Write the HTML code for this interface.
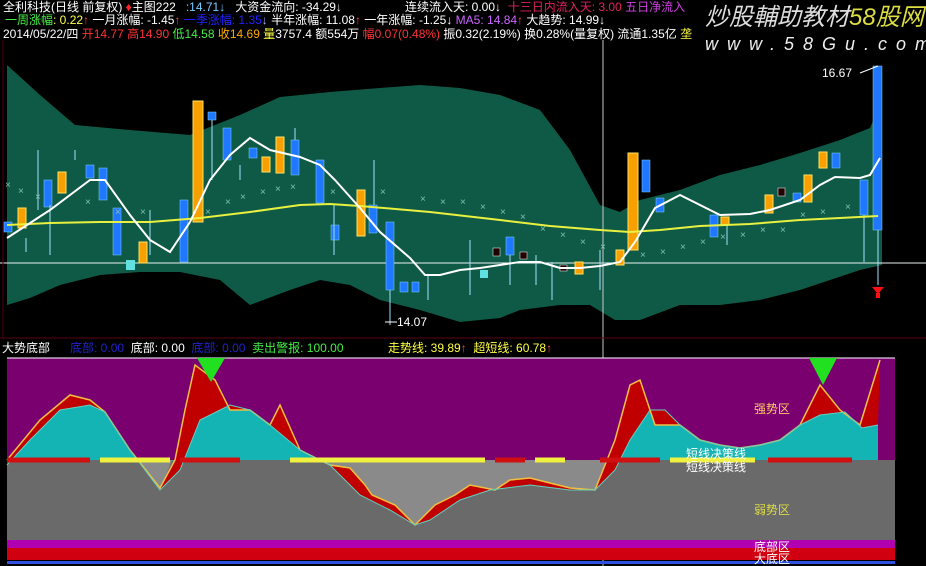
<!DOCTYPE html>
<html><head><meta charset="utf-8"><style>
body{margin:0;background:#000;width:926px;height:566px;overflow:hidden;position:relative;font-family:"Liberation Sans","Noto Sans CJK SC",sans-serif;font-size:12px}
.t{position:absolute;white-space:nowrap;line-height:14px}
</style></head><body>
<svg width="926" height="566" style="position:absolute;left:0;top:0">
<polygon fill="#0f5a46" points="7,65 40,95 75,125 130,130 190,135 240,115 280,97 330,92 380,88 420,85 460,88 500,95 540,110 570,150 600,205 620,212 640,200 680,190 720,175 760,165 800,153 840,140 870,128 882,100 882,265 860,270 830,280 800,290 760,300 720,305 680,305 640,320 615,320 590,305 560,305 520,310 500,318 460,322 420,310 380,300 350,285 320,280 290,290 250,305 220,280 180,272 140,272 100,275 60,285 30,298 7,305"/>
<line x1="0" y1="263" x2="926" y2="263" stroke="#e8f0f0" stroke-width="1"/>
<line x1="603" y1="40" x2="603" y2="566" stroke="#c8c8c8" stroke-width="1"/>
<line x1="0" y1="338" x2="926" y2="338" stroke="#600010" stroke-width="1"/>
<line x1="3" y1="40" x2="3" y2="338" stroke="#500010" stroke-width="1"/>
<g>
<g fill="#1f78ff" stroke="#7fd0ff" stroke-width="0.5">
<rect x="4" y="222" width="8" height="10"/><rect x="44" y="180" width="8" height="27"/><rect x="86" y="165" width="8" height="13"/><rect x="99" y="168" width="8" height="32"/><rect x="113" y="208" width="8" height="47"/><rect x="180" y="200" width="8" height="62"/><rect x="208" y="112" width="8" height="8"/><rect x="223" y="128" width="8" height="32"/><rect x="249" y="148" width="8" height="10"/><rect x="291" y="140" width="8" height="35"/><rect x="316" y="160" width="8" height="43"/><rect x="331" y="225" width="8" height="15"/><rect x="369" y="205" width="8" height="28"/><rect x="386" y="222" width="8" height="68"/><rect x="400" y="282" width="8" height="10"/><rect x="412" y="282" width="7" height="10"/><rect x="506" y="237" width="8" height="18"/><rect x="642" y="160" width="8" height="32"/><rect x="656" y="198" width="8" height="14"/><rect x="710" y="215" width="8" height="22"/><rect x="793" y="193" width="8" height="9"/><rect x="832" y="153" width="8" height="15"/><rect x="860" y="180" width="8" height="35"/><rect x="873" y="66" width="9" height="164"/>
</g>
<g fill="#f8a000" stroke="#ffe060" stroke-width="1">
<rect x="18" y="208" width="8" height="20"/><rect x="58" y="172" width="8" height="21"/><rect x="139" y="242" width="8" height="21"/><rect x="193" y="101" width="10" height="121"/><rect x="262" y="157" width="8" height="15"/><rect x="276" y="137" width="8" height="36"/><rect x="357" y="190" width="8" height="46"/><rect x="575" y="262" width="8" height="12"/><rect x="616" y="250" width="8" height="15"/><rect x="628" y="153" width="10" height="97"/><rect x="721" y="217" width="8" height="8"/><rect x="765" y="195" width="8" height="18"/><rect x="804" y="175" width="8" height="27"/><rect x="819" y="152" width="8" height="16"/>
</g>
<rect x="126" y="260" width="9" height="10" fill="#60e0e0"/><rect x="480" y="270" width="8" height="8" fill="#60e0e0"/>
<g fill="#200000" stroke="#fff" stroke-width="0.5"><rect x="493" y="248" width="7" height="8"/><rect x="520" y="252" width="7" height="7"/><rect x="560" y="265" width="7" height="6"/><rect x="778" y="188" width="7" height="8"/></g>
<g stroke="#a0e0ff" stroke-width="1">
<line x1="26" y1="238" x2="26" y2="252"/><line x1="38" y1="150" x2="38" y2="210"/><line x1="50" y1="205" x2="50" y2="255"/><line x1="75" y1="150" x2="75" y2="160"/><line x1="150" y1="210" x2="150" y2="255"/><line x1="212" y1="120" x2="212" y2="180"/><line x1="240" y1="165" x2="240" y2="180"/><line x1="295" y1="128" x2="295" y2="140"/><line x1="334" y1="205" x2="334" y2="255"/><line x1="374" y1="160" x2="374" y2="205"/><line x1="390" y1="290" x2="390" y2="325"/><line x1="470" y1="240" x2="470" y2="295"/><line x1="510" y1="255" x2="510" y2="285"/><line x1="536" y1="255" x2="536" y2="285"/><line x1="552" y1="262" x2="552" y2="300"/><line x1="600" y1="250" x2="600" y2="290"/><line x1="727" y1="225" x2="727" y2="245"/><line x1="864" y1="215" x2="864" y2="262"/><line x1="878" y1="230" x2="878" y2="285"/><line x1="428" y1="275" x2="428" y2="300"/>
</g>
<g fill="#80c0b0" font-size="10">
<text x="5" y="188">×</text><text x="18" y="194">×</text><text x="35" y="200">×</text><text x="85" y="205">×</text><text x="115" y="215">×</text><text x="140" y="215">×</text><text x="205" y="215">×</text><text x="225" y="205">×</text><text x="240" y="200">×</text><text x="260" y="195">×</text><text x="275" y="192">×</text><text x="290" y="190">×</text><text x="330" y="195">×</text><text x="380" y="195">×</text><text x="420" y="202">×</text><text x="440" y="205">×</text><text x="460" y="205">×</text><text x="480" y="210">×</text><text x="500" y="215">×</text><text x="520" y="220">×</text><text x="540" y="232">×</text><text x="560" y="238">×</text><text x="580" y="245">×</text><text x="600" y="250">×</text><text x="640" y="258">×</text><text x="660" y="255">×</text><text x="680" y="250">×</text><text x="700" y="245">×</text><text x="720" y="240">×</text><text x="740" y="238">×</text><text x="760" y="233">×</text><text x="780" y="233">×</text><text x="800" y="218">×</text><text x="820" y="215">×</text><text x="845" y="210">×</text>
</g>
</g>
<polyline fill="none" stroke="#e8f040" stroke-width="2" points="7,225 50,223 100,222 150,222 200,218 250,212 300,205 330,204 360,206 430,212 500,220 550,226 600,230 630,232 660,230 700,226 750,224 800,220 840,218 878,216"/>
<polyline fill="none" stroke="#ffffff" stroke-width="2" points="7,238 50,210 90,180 105,180 130,215 150,240 170,252 190,222 210,180 230,155 250,138 270,150 300,157 320,165 335,180 360,208 380,232 410,258 425,275 440,275 460,270 480,268 500,265 520,262 540,262 560,268 580,268 600,266 620,262 635,242 655,208 680,195 700,205 720,215 750,214 770,210 800,200 820,185 835,177 860,178 870,175 880,158"/>
<line x1="385" y1="322" x2="397" y2="322" stroke="#fff"/>
<line x1="860" y1="73" x2="878" y2="66" stroke="#fff"/>
<polygon fill="#ff1010" points="872,287 884,287 878,294"/><rect x="876" y="293" width="4" height="5" fill="#ff1010"/>
<!-- lower panel -->
<rect x="7" y="358" width="888" height="102" fill="#7a0070"/>
<rect x="7" y="460" width="888" height="80" fill="#6a6a6a"/>
<rect x="7" y="540" width="888" height="8" fill="#b000b0"/>
<rect x="7" y="548" width="888" height="12" fill="#d00010"/>
<rect x="7" y="561" width="888" height="3" fill="#3050e0"/>
<line x1="7" y1="358" x2="895" y2="358" stroke="#ffffff" stroke-width="1"/>
<!-- cyan above 460 -->
<polygon fill="#14b4b4" points="7,465 30,440 60,410 90,405 105,412 130,450 137,460 7,460"/>
<polygon fill="#14b4b4" points="172,460 180,470 200,420 230,405 250,410 270,425 300,450 320,460"/>
<polygon fill="#14b4b4" points="608,460 615,470 630,440 650,410 665,410 680,425 700,440 720,445 740,448 760,445 780,440 800,425 820,415 845,412 862,428 878,425 878,460"/>
<!-- lighter gray below 460 -->
<polygon fill="#8a8a8a" points="137,460 160,490 172,460"/>
<polygon fill="#8a8a8a" points="320,460 330,465 360,495 390,510 415,525 430,520 460,500 490,490 530,485 570,490 595,490 608,460"/>
<!-- red between lines -->
<polygon fill="#c00000" points="7,460 40,420 70,395 90,400 105,412 130,450 160,488 175,460 185,410 195,365 215,380 230,410 250,410 270,425 280,405 300,450 330,465 350,468 365,485 372,495 395,505 415,525 435,505 455,495 470,485 495,490 510,480 530,478 550,483 570,488 595,490 615,440 630,385 640,380 655,425 680,425 700,440 720,445 740,448 760,445 780,440 800,425 820,385 840,410 860,425 880,360 878,425 862,428 845,412 820,415 800,425 780,440 760,445 740,448 720,445 700,440 680,425 665,410 650,410 630,440 615,470 595,490 570,490 530,485 490,490 460,500 430,520 415,525 390,510 360,495 330,465 300,450 270,425 250,410 230,405 200,420 180,470 160,490 130,450 105,412 90,405 60,410 30,440 7,465"/>
<polyline fill="none" stroke="#f0c040" stroke-width="1.5" points="7,460 40,420 70,395 90,400 105,412 130,450 160,488 175,460 185,410 195,365 215,380 230,410 250,410 270,425 280,405 300,450 330,465 350,468 365,485 372,495 395,505 415,525 435,505 455,495 470,485 495,490 510,480 530,478 550,483 570,488 595,490 615,440 630,385 640,380 655,425 680,425 700,440 720,445 740,448 760,445 780,440 800,425 820,385 840,410 860,425 880,360"/>
<polyline fill="none" stroke="#60d0c0" stroke-width="1" points="7,465 30,440 60,410 90,405 105,412 130,450 160,490 180,470 200,420 230,405 250,410 270,425 300,450 330,465 360,495 390,510 415,525 430,520 460,500 490,490 530,485 570,490 595,490 615,470 630,440 650,410 665,410 680,425 700,440 720,445 740,448 760,445 780,440 800,425 820,415 845,412 862,428 878,425"/>
<g stroke-width="5">
<line x1="7" y1="460" x2="90" y2="460" stroke="#d01010"/><line x1="100" y1="460" x2="170" y2="460" stroke="#f0f040"/><line x1="180" y1="460" x2="240" y2="460" stroke="#d01010"/><line x1="290" y1="460" x2="485" y2="460" stroke="#f0f040"/><line x1="495" y1="460" x2="525" y2="460" stroke="#d01010"/><line x1="535" y1="460" x2="565" y2="460" stroke="#f0f040"/><line x1="600" y1="460" x2="660" y2="460" stroke="#d01010"/><line x1="670" y1="460" x2="755" y2="460" stroke="#f0f040"/><line x1="768" y1="460" x2="852" y2="460" stroke="#d01010"/>
</g>
<polygon fill="#20e020" points="197,358 225,358 211,382"/>
<polygon fill="#20e020" points="809,358 837,358 823,385"/>
</svg>
<div class="t" style="left:3px;top:0px;color:#fff">全利科技(日线 前复权) <span style="color:#f22">♦</span>主图222 &nbsp; <span style="color:#7cf">:14.71↓</span> &nbsp; <span style="color:#fff">大资金流向: -34.29↓</span></div>
<div class="t" style="left:405px;top:0px;color:#fff">连续流入天: 0.00↓ &nbsp;<span style="color:#e02060">十三日内流入天: 3.00</span> <span style="color:#d040e0">五日净流入</span></div>
<div class="t" style="left:5px;top:13px;color:#ff4"><span style="color:#4e4">一周涨幅</span>: 0.22<span style="color:#f44">↑</span> <span style="color:#fff">一月涨幅: -1.45</span><span style="color:#f44">↑</span> <span style="color:#22f">一季涨幅: 1.35</span><span style="color:#aaf">↓</span> <span style="color:#fff">半年涨幅: 11.08</span><span style="color:#f44">↑</span> <span style="color:#fff">一年涨幅: -1.25↓</span> <span style="color:#c6f">MA5: 14.84</span><span style="color:#f44">↑</span> <span style="color:#fff">大趋势: 14.99↓</span></div>
<div class="t" style="left:3px;top:27px;color:#fff">2014/05/22/四 <span style="color:#f33">开14.77 高14.90</span> <span style="color:#4e4">低14.58</span> <span style="color:#fa0">收14.69</span> <span style="color:#ff4">量</span>3757.4 额554万 <span style="color:#f33">幅0.07(0.48%)</span> 振0.32(2.19%) 换0.28%(量复权) 流通1.35亿 <span style="color:#ff4">垄</span></div>
<div class="t" style="left:705px;top:4px;font-size:24px;line-height:28px;font-style:italic;color:#ddd">炒股輔助教材<span style="color:#dd4">58股网</span></div>
<div class="t" style="left:705px;top:37px;font-size:18px;color:#eee;font-style:italic;letter-spacing:9px">www.58Gu.com</div>
<div class="t" style="left:822px;top:66px;color:#fff">16.67</div>
<div class="t" style="left:397px;top:315px;color:#fff">14.07</div>
<div class="t" style="left:2px;top:341px;color:#fff">大势底部 &nbsp; &nbsp; &nbsp;<span style="color:#22c">底部: 0.00</span> &nbsp;底部: 0.00 &nbsp;<span style="color:#22c">底部: 0.00</span> &nbsp;<span style="color:#4e4">卖出警报: 100.00</span></div>
<div class="t" style="left:388px;top:341px;color:#ff4">走势线: 39.89<span style="color:#f44">↑</span> &nbsp;超短线: 60.78<span style="color:#f44">↑</span></div>
<div class="t" style="left:754px;top:402px;color:#fc6">强势区</div>
<div class="t" style="left:686px;top:447px;color:#fff">短线决策线</div>
<div class="t" style="left:686px;top:460px;color:#fff">短线决策线</div>
<div class="t" style="left:754px;top:503px;color:#dd4">弱势区</div>
<div class="t" style="left:754px;top:540px;color:#fff">底部区</div>
<div class="t" style="left:754px;top:552px;color:#fff">大底区</div>
</body></html>
